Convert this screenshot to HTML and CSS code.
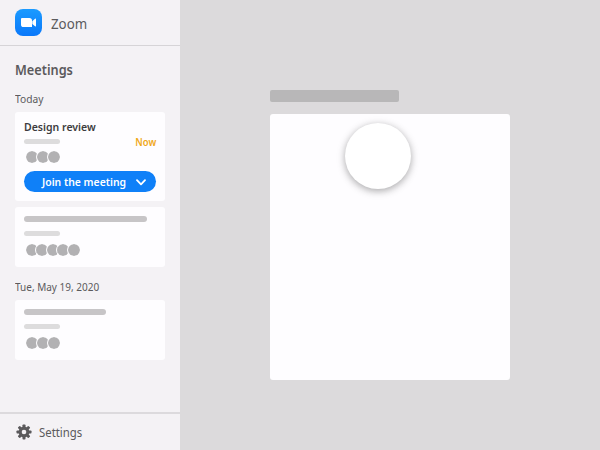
FILE: index.html
```html
<!DOCTYPE html>
<html lang="en">
<head>
<meta charset="utf-8">
<title>Zoom meetings</title>
<link rel="stylesheet" href="styles.css">
</head>
<body>
<aside class="sidebar">
  <header class="brand">
    <svg class="logo" viewBox="0 0 27 27">
      <defs><linearGradient id="g" x1="0" y1="0" x2="0" y2="1"><stop offset="0" stop-color="#1b9bff"/><stop offset="1" stop-color="#0a78fa"/></linearGradient></defs>
      <rect width="27" height="27" rx="8" fill="url(#g)"/>
      <path d="M7 9H14.400Q17 9 17 11.600V18H8.600Q6 18 6 15.400V10Q6 9 7 9ZM17.300 12.200L20 9.700Q21 9 21 10.200V16.800Q21 18 20 17.300L17.300 14.900Z" fill="#fff"/>
    </svg>
    <span class="brand-name">Zoom</span>
  </header>
  <main class="meetings">
    <h1 class="heading">Meetings</h1>
    <h2 class="day">Today</h2>
    <section class="card card-now">
      <h3 class="title">Design review</h3>
      <div class="time"><i class="bar bar-sub"></i><span class="now">Now</span></div>
      <div class="avatars"><i></i><i></i><i></i></div>
      <button class="join"><span class="join-label">Join the meeting</span>
        <svg class="chevron" viewBox="0 0 10 7"><path d="M1 1.200L5 5.400L9 1.200" fill="none" stroke="#fff" stroke-width="1.800" stroke-linecap="round" stroke-linejoin="round"/></svg>
      </button>
    </section>
    <section class="card card-idle">
      <i class="bar bar-long"></i>
      <i class="bar bar-sub"></i>
      <div class="avatars tight"><i></i><i></i><i></i><i></i><i></i></div>
    </section>
    <h2 class="day day-next">Tue, May 19, 2020</h2>
    <section class="card card-idle">
      <i class="bar bar-medium"></i>
      <i class="bar bar-sub"></i>
      <div class="avatars"><i></i><i></i><i></i></div>
    </section>
  </main>
  <footer class="settings">
    <svg class="gear" viewBox="-8 -8 16 16" fill="#5b5a5c">
      <g id="teeth"><rect x="-1.500" y="-7.500" width="3" height="15" rx=".7"/><rect x="-7.500" y="-1.500" width="15" height="3" rx=".7"/></g>
      <use href="#teeth" transform="rotate(45)"/>
      <circle r="5.400"/><circle r="2.300" fill="#f4f2f5"/>
    </svg>
    <span class="settings-label">Settings</span>
  </footer>
</aside>
<div class="stage">
  <div class="stage-label"></div>
  <div class="panel"><div class="disc"></div></div>
</div>
</body>
</html>
```

FILE: styles.css
```css
* { box-sizing: border-box; }
body {
  margin: 0;
  height: 450px;
  display: flex;
  overflow: hidden;
  background: #dcdadc;
  color: #5b5a5c;
  font-family: "Noto Sans", sans-serif;
}
h1, h2, h3 { margin: 0; white-space: nowrap; }
i { display: block; }

/* Slightly condensed labels */
.brand-name, .heading, .day, .title, .join-label, .settings-label {
  transform-origin: left center;
}
.brand-name { transform: scaleX(0.95); }
.heading { transform: scaleX(0.91); }
.day { transform: scaleX(0.89); }
.day-next { transform: scaleX(0.87); }
.title { transform: scaleX(0.915); }
.join-label { transform: scaleX(0.905); }
.settings-label { transform: scaleX(0.875); }
.now { transform: scaleX(0.94); transform-origin: right center; }

.sidebar {
  width: 180px;
  height: 450px;
  display: flex;
  flex-direction: column;
  background: #f4f2f5;
}
.brand {
  height: 46px;
  flex: none;
  display: flex;
  align-items: center;
  gap: 9px;
  padding: 0 15px 1px;
  border-bottom: 1px solid #d6d4d7;
}
.logo { width: 27px; height: 27px; }
.brand-name { font-size: 14px; line-height: 20px; padding-top: 3px; }
.meetings { flex: 1; padding: 14px 15px 0; }
.heading { font-size: 14px; font-weight: 600; line-height: 20px; }
.day {
  margin-top: 11px;
  height: 21px;
  font-size: 11.500px;
  font-weight: 400;
  line-height: 15px;
}
.day-next { margin-top: 12px; }
.card {
  width: 150px;
  padding: 0 9px;
  border-radius: 3px;
  background: #fefdff;
}
.card-now { height: 89px; padding-top: 7px; }
.card-idle { height: 60px; padding-top: 9px; }
.card-now + .card-idle { margin-top: 6px; }
.title {
  font-size: 11.500px;
  font-weight: 600;
  line-height: 16px;
  color: #3d3c3e;
}
.time { height: 14px; display: flex; align-items: center; justify-content: space-between; }
.now { font-size: 10px; font-weight: 600; line-height: 14px; color: #f0a81a; }
.bar { border-radius: 3px; background: #c7c5c7; }
.bar-sub { width: 36px; height: 5px; background: #dddcdd; }
.time .bar-sub { margin-top: -1px; }
.bar-long { width: 123px; height: 6px; }
.bar-medium { width: 82px; height: 6px; }
.card-idle .bar-sub { margin-top: 9px; }
.avatars { display: flex; margin-top: 1px; }
.card-idle .avatars { margin-top: 7px; }
.avatars i {
  width: 14px;
  height: 14px;
  margin-right: -2.700px;
  border: 0.500px solid #fefdff;
  border-radius: 50%;
  background: #b2b1b3 content-box;
  box-shadow: none;
}
.avatars i:first-child { margin-left: 0.500px; }
.avatars.tight i { margin-right: -3.500px; }
.join {
  width: 132px;
  height: 21px;
  margin: 7px 0 0;
  padding: 0 10px 0 18px;
  display: flex;
  align-items: center;
  border: 0;
  border-radius: 11px;
  background: #0f80f8;
  color: #fff;
  font: 600 11.500px/16px "Noto Sans", sans-serif;
  white-space: nowrap;
}
.join-label { width: 94px; text-align: left; }
.chevron { width: 10px; height: 7px; flex: none; margin-top: 1px; }
.settings {
  height: 38px;
  flex: none;
  display: flex;
  align-items: center;
  gap: 7px;
  padding: 0 16px;
  border-top: 2px solid #dcdadd;
}
.gear { width: 16px; height: 16px; }
.settings-label { font-size: 13px; line-height: 18px; }
.stage { flex: 1; padding: 90px 0 0 90px; }
.stage-label { width: 129px; height: 12px; border-radius: 2px; background: #b8b7b8; }
.panel {
  width: 240px;
  height: 266px;
  margin-top: 12px;
  padding: 9.400px 0 0 75px;
  border-radius: 3px;
  background: #fefdff;
}
.disc {
  width: 66px;
  height: 66px;
  border-radius: 50%;
  background: #fff;
  box-shadow: 0 2px 7px rgba(0, 0, 0, 0.28), 0 2px 12px rgba(0, 0, 0, 0.08);
}
```
